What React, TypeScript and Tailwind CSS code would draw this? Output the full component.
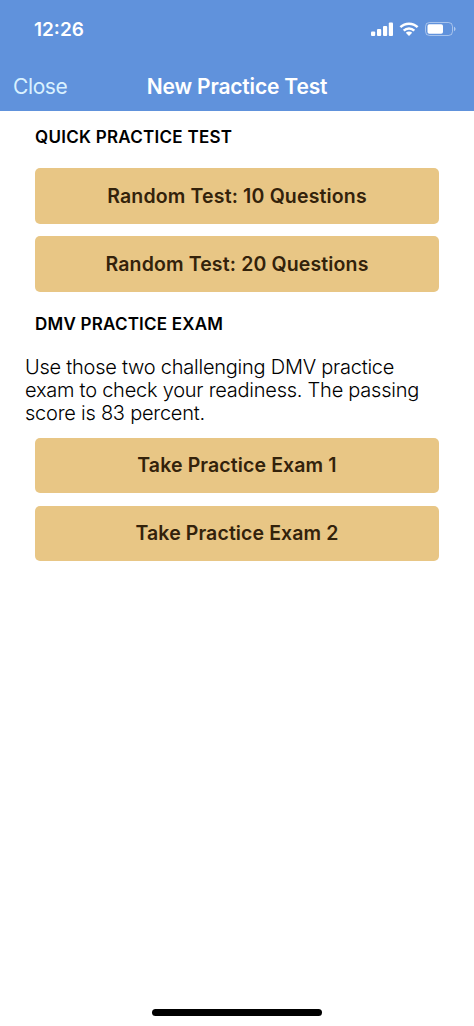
import clsx from 'clsx';

interface TestButtonProps {
  label: string;
  className?: string;
}

const quickTests = [
  { label: 'Random Test: 10 Questions', className: 'tracking-[0.16px]' },
  { label: 'Random Test: 20 Questions', className: 'tracking-[0.14px]' },
];

const exams = [
  { label: 'Take Practice Exam 1', className: 'tracking-[0.12px]' },
  { label: 'Take Practice Exam 2', className: 'tracking-[0.1px]' },
];

function StatusBar() {
  return (
    <div className="flex h-[58px] items-center justify-between pr-[18px] pl-[34px]">
      <span className="pt-0.5 text-[19px] leading-6 font-semibold">12:26</span>
      <div className="flex items-center">
        {/* signal */}
        <svg width="22" height="14" viewBox="0 0 22 14" fill="currentColor">
          <rect x="0" y="9.5" width="4.2" height="4.5" rx="1" />
          <rect x="6" y="7" width="4.2" height="7" rx="1" />
          <rect x="12" y="4" width="4.2" height="10" rx="1" />
          <rect x="17.8" y="0.5" width="4.2" height="13.5" rx="1" />
        </svg>
        {/* wifi */}
        <svg className="ml-1.5" width="20" height="14" viewBox="0 0 20 14" fill="none">
          <path
            d="M1.4 5.2a12.3 12.3 0 0 1 17.2 0M4.7 8.6a7.6 7.6 0 0 1 10.6 0"
            stroke="currentColor"
            strokeWidth="2.5"
          />
          <path d="M10 14 6.8 10.8a4.6 4.6 0 0 1 6.4 0Z" fill="currentColor" />
        </svg>
        {/* battery */}
        <svg className="ml-1.5" width="31" height="14" viewBox="0 0 31 14" fill="none">
          <rect x="0.5" y="0.5" width="27" height="13" rx="4" stroke="currentColor" strokeOpacity="0.45" />
          <rect x="2.5" y="2.3" width="15.5" height="9.4" rx="1.8" fill="currentColor" />
          <path d="M29 4.8c2 .7 2 3.7 0 4.4Z" fill="currentColor" fillOpacity="0.5" />
        </svg>
      </div>
    </div>
  );
}

function TestButton({ label, className }: TestButtonProps) {
  return (
    <button
      type="button"
      className={clsx(
        'h-[55.5px] w-full rounded-[5px] bg-[#e8c685] text-[19.5px] leading-6 font-semibold text-[#33220b]',
        className
      )}
    >
      {label}
    </button>
  );
}

export default function App() {
  return (
    <div className="flex h-[1026px] w-[474px] flex-col overflow-hidden bg-white font-['Inter',sans-serif] text-black">
      <header className="h-[111px] bg-[#6092dc] text-white">
        <StatusBar />
        <div className="grid h-[53px] grid-cols-[1fr_auto_1fr] items-center px-[13px] pt-1">
          <button
            type="button"
            className="text-left text-[21px] leading-6 tracking-[-0.4px] text-[#d9f1ff]"
          >
            Close
          </button>
          <h1 className="text-[21px] leading-6 font-semibold tracking-[-0.17px]">New Practice Test</h1>
        </div>
      </header>

      <main className="flex-1">
        <section className="px-[35px] pt-[14px]">
          <h2 className="text-[17px] leading-6 font-semibold tracking-[0.27px]">QUICK PRACTICE TEST</h2>
          <div className="mt-[19px] flex flex-col gap-[12.5px]">
            {quickTests.map((test) => (
              <TestButton key={test.label} {...test} />
            ))}
          </div>
        </section>

        <section className="pt-5">
          <h2 className="px-[35px] text-[17px] leading-6 font-semibold tracking-[0.22px]">
            DMV PRACTICE EXAM
          </h2>
          <p className="mt-5 pl-[25px] text-[20px] leading-[23px] font-light tracking-[-0.24px] whitespace-nowrap">
            Use those two challenging DMV practice
            <br />
            exam to check your readiness. The passing
            <br />
            score is 83 percent.
          </p>
          <div className="mt-[13px] flex flex-col gap-[12.5px] px-[35px]">
            {exams.map((exam) => (
              <TestButton key={exam.label} {...exam} />
            ))}
          </div>
        </section>
      </main>

      {/* home indicator */}
      <div className="mb-[10px] h-[7px] w-[170px] shrink-0 self-center rounded-full bg-black" />
    </div>
  );
}
